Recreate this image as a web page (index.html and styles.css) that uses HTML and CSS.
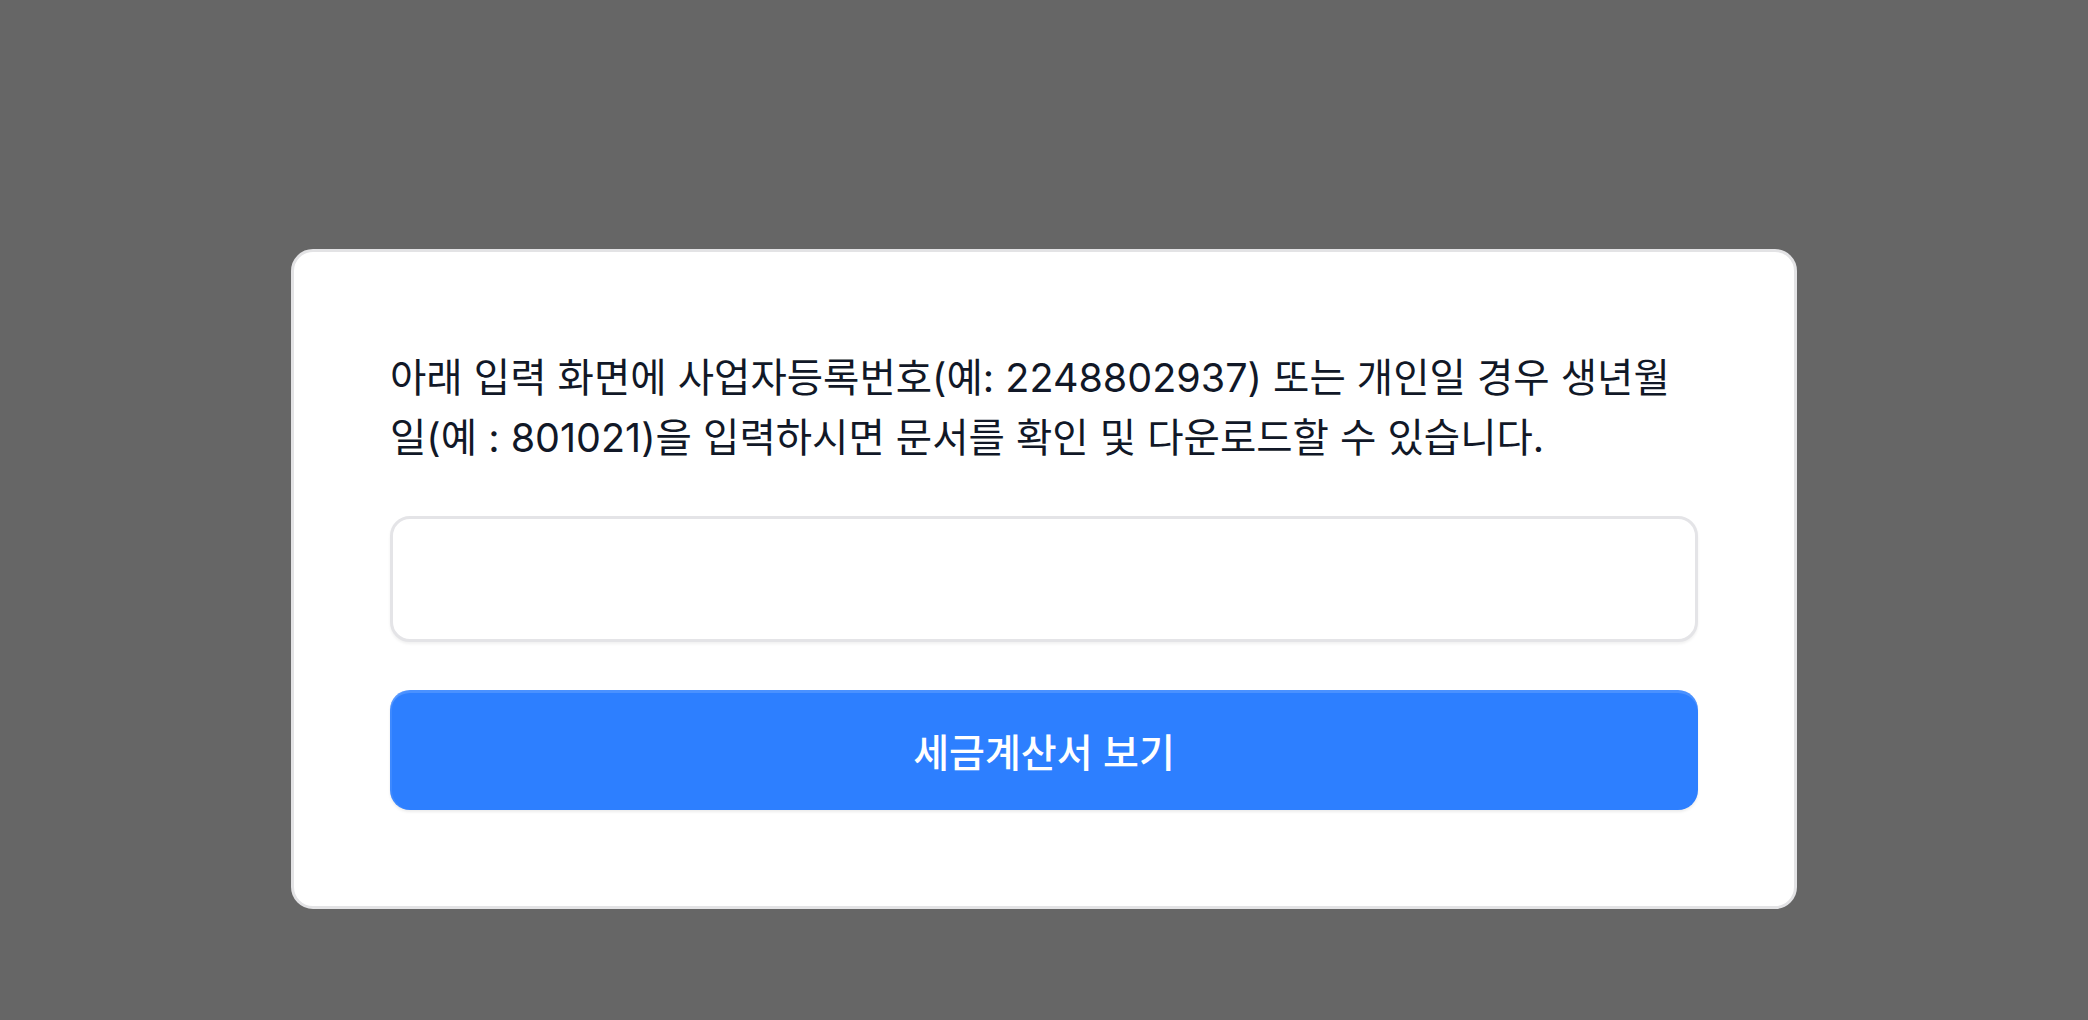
FILE: index.html
```html
<!DOCTYPE html>
<html lang="ko">
<head>
<meta charset="utf-8">
<title>세금계산서 보기</title>
<link rel="stylesheet" href="styles.css">
</head>
<body>
<main class="page">
  <section class="card">
    <p class="intro">아래 입력 화면에 사업자등록번호(예: 2248802937) 또는 개인일 경우 생년월일(예 : 801021)을 입력하시면 문서를 확인 및 다운로드할 수 있습니다.</p>
    <input class="field" type="text" aria-label="사업자등록번호 또는 생년월일">
    <button class="submit" type="button">세금계산서 보기</button>
  </section>
</main>
</body>
</html>
```

FILE: styles.css
```css
html, body {
  margin: 0;
  padding: 0;
  height: 100%;
}
body {
  background: #666666;
  font-family: Inter, "Noto Sans CJK KR", sans-serif;
}
.page {
  padding-top: 249px;
}
.card {
  box-sizing: border-box;
  width: 1506px;
  margin: 0 auto;
  background: #ffffff;
  border: 3px solid #e3e3e5;
  border-radius: 22px;
  padding: 96px;
  display: flex;
  flex-direction: column;
}
.intro {
  margin: 0 0 48px;
  font-size: 39.5px;
  line-height: 60px;
  color: #111827;
  font-weight: 400;
}
.field {
  box-sizing: border-box;
  width: 100%;
  height: 126px;
  border: 3px solid #e4e4e7;
  border-radius: 20px;
  background: #ffffff;
  box-shadow: 0 2px 3px rgba(0, 0, 0, 0.06);
  outline: none;
  font-size: 36px;
  padding: 0 24px;
  font-family: inherit;
}
.submit {
  margin-top: 48px;
  height: 120px;
  width: 100%;
  border: none;
  border-radius: 20px;
  background: #2d7fff;
  box-shadow: inset 0 3px 0 rgba(255, 255, 255, 0.14), inset 2px 0 0 rgba(255, 255, 255, 0.08), 0 2px 3px rgba(0, 0, 0, 0.08);
  color: #ffffff;
  font-family: inherit;
  font-size: 39px;
  font-weight: 500;
  cursor: pointer;
}
```
